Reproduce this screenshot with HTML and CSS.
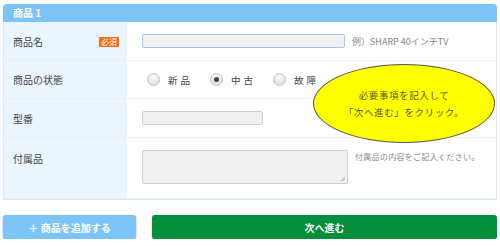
FILE: index.html
```html
<!DOCTYPE html>
<html lang="ja">
<head>
<meta charset="utf-8">
<link rel="stylesheet" href="styles.css">
</head>
<body>
<div class="page">
  <div class="panel">
    <div class="panel-head">商品 1</div>
    <div class="row r1">
      <div class="label"><span>商品名</span><span class="badge">必須</span></div>
      <div class="field"><div class="input wide focus"></div><span class="hint">例）SHARP 40インチTV</span></div>
    </div>
    <div class="row r2">
      <div class="label"><span>商品の状態</span></div>
      <div class="field radios">
        <span class="radio"><i class="dot"></i><b>新品</b></span>
        <span class="radio"><i class="dot on"></i><b>中古</b></span>
        <span class="radio"><i class="dot"></i><b>故障</b></span>
      </div>
    </div>
    <div class="row r3">
      <div class="label"><span>型番</span></div>
      <div class="field"><div class="input short"></div></div>
    </div>
    <div class="row r4">
      <div class="label"><span>付属品</span></div>
      <div class="field"><div class="textarea"><svg class="grip" width="6" height="6" viewBox="0 0 6 6"><path d="M5 1L1 5M5 3L3 5" stroke="#999" stroke-width="0.8"/></svg></div><span class="hint small">付属品の内容をご記入ください。</span></div>
    </div>
    <div class="bubble"><p>必要事項を記入して</p><p>「次へ進む」をクリック。</p></div>
  </div>
  <div class="actions">
    <div class="btn add">＋ 商品を追加する</div>
    <div class="btn next">次へ進む</div>
  </div>
</div>
</body>
</html>
```
FILE: styles.css
```css
* { box-sizing: border-box; }
body {
  margin: 0;
  background: #fff;
  font-family: "Noto Sans CJK JP", "Noto Sans", sans-serif;
  color: #444;
}
.page { padding: 4px 3px 0 3px; width: 500px; }
.panel {
  position: relative;
  border: 1px solid #d5e9fb;
  border-top: none;
  border-radius: 4px 4px 0 0;
}
.panel-head {
  height: 18px;
  margin: 0 -1px;
  background: #7cc3f7;
  border-radius: 4px 4px 0 0;
  color: #fff;
  font-weight: bold;
  font-size: 10px;
  line-height: 18px;
  padding-left: 10px;
}
.row {
  display: grid;
  grid-template-columns: 123px 1fr;
  border-bottom: 1px solid #eeeeee;
}
.row:last-of-type { border-bottom: none; }
.r1 { height: 39px; }
.r2 { height: 38px; }
.r3 { height: 39px; }
.r4 { height: 61px; }
.label {
  background: #ebf5fe;
  display: flex;
  align-items: center;
  justify-content: space-between;
  padding: 0 8px 0 9px;
  font-size: 10px;
}
.r4 .label { align-items: flex-start; padding-top: 13px; }
.badge {
  background: #f46a0e;
  color: #fff;
  font-size: 8px;
  line-height: 10px;
  height: 10px;
  padding: 0 2px;
  border-radius: 1px;
  margin-top: 1px;
}
.field {
  display: flex;
  align-items: center;
  padding-left: 15px;
  gap: 7px;
}
.r4 .field { align-items: flex-start; padding-top: 12px; gap: 7px; }
.input {
  height: 14px;
  background: #f0f0f0;
  border: 1px solid #cfcfcf;
  border-radius: 2px;
}
.input.wide { width: 203px; }
.input.focus { border-color: #a9c6ee; }
.input.short { width: 121px; }
.textarea {
  position: relative;
  width: 206px;
  height: 34px;
  background: #f0f0f0;
  border: 1px solid #cfcfcf;
  border-radius: 2px;
}
.grip { position: absolute; right: 1px; bottom: 1px; }
.hint { font-size: 9px; color: #888; }
.hint.small { font-size: 8px; letter-spacing: 0.3px; margin-top: 1px; }
.radios { gap: 0; padding-left: 20px; }
.radio { display: flex; align-items: center; width: 63px; }
.radio b { font-weight: normal; font-size: 9.5px; letter-spacing: 3px; color: #444; margin-left: 8px; }
.dot {
  width: 13px; height: 13px;
  border-radius: 50%;
  border: 1px solid #c4c4c4;
  background: radial-gradient(circle at 50% 30%, #fafafa 0%, #e2e2e2 70%, #d0d0d0 100%);
  display: flex; align-items: center; justify-content: center;
}
.dot.on::after {
  content: "";
  width: 5px; height: 5px; border-radius: 50%;
  background: #444;
}
.bubble {
  position: absolute;
  left: 309px; top: 60px;
  width: 182px; height: 79px;
  border-radius: 50%;
  background: #ffff00;
  border: 1px solid #555;
  display: flex; flex-direction: column; align-items: center; justify-content: center;
  color: #5a5a2a;
  font-size: 9.5px;
  letter-spacing: 0.6px;
  line-height: 17px;
}
.bubble p { margin: 0; }
.actions {
  display: flex;
  gap: 16px;
  margin-top: 15px;
}
.btn {
  height: 24px;
  border-radius: 3px;
  color: #fff;
  font-weight: bold;
  font-size: 10px;
  display: flex; align-items: center; justify-content: center;
  box-shadow: 0 1px 2px rgba(0,0,0,0.35);
}
.add { width: 133px; background: #7cc3f7; }
.next { flex: 1; background: #008f3b; }
```
